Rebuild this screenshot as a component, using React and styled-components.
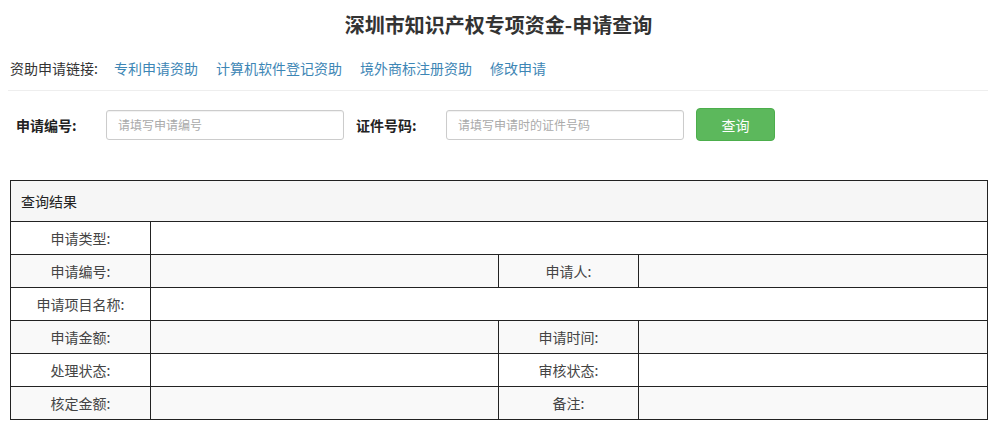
import React, { useState } from 'react';
import styled, { createGlobalStyle } from 'styled-components';

const GlobalStyle = createGlobalStyle`
  body {
    margin: 0;
    background: #fff;
    font-family: "Noto Sans CJK SC", "Noto Sans", sans-serif;
    color: #333;
  }
`;

const links = ['专利申请资助', '计算机软件登记资助', '境外商标注册资助', '修改申请'];

const rows = [
    { label: '申请类型:', wide: true },
    { label: '申请编号:', second: '申请人:' },
    { label: '申请项目名称:', wide: true },
    { label: '申请金额:', second: '申请时间:' },
    { label: '处理状态:', second: '审核状态:' },
    { label: '核定金额:', second: '备注:' },
];

export default function App() {
    const [query, setQuery] = useState({ appNo: '', certNo: '' });

    const handleChange = (e) => {
        setQuery({
            ...query,
            [e.target.name]: e.target.value
        })
    };

    return (
        <Page>
            <GlobalStyle />
            <Title>深圳市知识产权专项资金-申请查询</Title>
            <LinkBar>
                <span>资助申请链接:</span>
                {links.map(l => <LinkItem key={l} href="#">{l}</LinkItem>)}
            </LinkBar>
            <SearchRow onSubmit={e => e.preventDefault()}>
                <FieldLabel>申请编号:</FieldLabel>
                <Input name="appNo" placeholder="请填写申请编号" value={query.appNo} onChange={handleChange} />
                <FieldLabel>证件号码:</FieldLabel>
                <Input name="certNo" placeholder="请填写申请时的证件号码" value={query.certNo} onChange={handleChange} />
                <SearchButton type="submit">查询</SearchButton>
            </SearchRow>
            <ResultTable>
                <colgroup>
                    <col style={{ width: 140 }} />
                    <col style={{ width: 348 }} />
                    <col style={{ width: 140 }} />
                    <col />
                </colgroup>
                <thead>
                    <tr>
                        <HeadCell colSpan={4}>查询结果</HeadCell>
                    </tr>
                </thead>
                <tbody>
                    {rows.map((r, i) => (
                        <Row key={r.label} $striped={i % 2 === 1}>
                            <LabelCell>{r.label}</LabelCell>
                            {r.wide ? (
                                <td colSpan={3}></td>
                            ) : (
                                <>
                                    <td></td>
                                    <LabelCell>{r.second}</LabelCell>
                                    <td></td>
                                </>
                            )}
                        </Row>
                    ))}
                </tbody>
            </ResultTable>
        </Page>
    );
}

const Page = styled.div`
    width: 997px;
    padding-top: 12px;
`;

const Title = styled.h1`
    margin: 0;
    text-align: center;
    font-size: 20px;
    line-height: 26px;
    font-weight: 700;
    color: #333;
`;

const LinkBar = styled.div`
    display: flex;
    align-items: center;
    gap: 18px;
    margin: 20px 9px 0 8px;
    padding: 0 0 12px 2px;
    border-bottom: 1px solid #eee;
    font-size: 14px;
    line-height: 20px;
    color: #333;

    span {
        margin-right: -2px;
    }
`;

const LinkItem = styled.a`
    color: #3d86b5;
    text-decoration: none;
`;

const SearchRow = styled.form`
    display: flex;
    align-items: center;
    height: 33px;
    margin-top: 17px;
    padding-left: 16px;
`;

const FieldLabel = styled.label`
    width: 90px;
    font-size: 14px;
    font-weight: 700;
    color: #222;
`;

const Input = styled.input`
    box-sizing: border-box;
    width: 238px;
    height: 30px;
    margin-right: 12px;
    padding: 0 11px;
    border: 1px solid #ccc;
    border-radius: 3px;
    font-family: inherit;
    font-size: 12px;
    color: #333;
    box-shadow: inset 0 1px 1px rgba(0, 0, 0, 0.06);

    &::placeholder {
        color: #aaa;
    }
`;

const SearchButton = styled.button`
    width: 79px;
    height: 33px;
    border: 1px solid #4cae4c;
    border-radius: 4px;
    background: #5cb85c;
    color: #fff;
    font-family: inherit;
    font-size: 14px;
    cursor: pointer;
`;

const ResultTable = styled.table`
    width: 978px;
    margin: 39px 0 0 10px;
    border-collapse: collapse;
    table-layout: fixed;
    font-size: 14px;
    color: #444;

    td, th {
        border: 1px solid #222;
        padding: 0;
    }
`;

const HeadCell = styled.th`
    height: 40px;
    padding-left: 10px !important;
    text-align: left;
    font-weight: 400;
    color: #222;
    background: #f6f6f6;
`;

const Row = styled.tr`
    height: 33px;
    background: ${p => (p.$striped ? '#f9f9f9' : '#fff')};
`;

const LabelCell = styled.td`
    text-align: center;
`;
